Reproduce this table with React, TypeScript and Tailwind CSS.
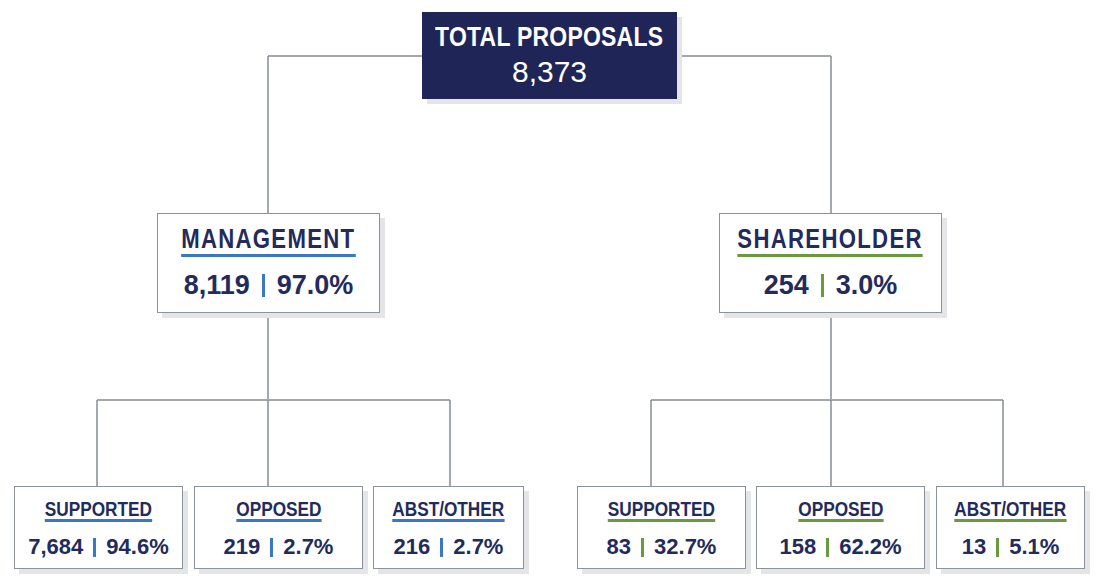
import React from "react";

type Accent = "blue" | "green";

const TITLE_FONT = "font-['Liberation_Sans',Arial,sans-serif] inline-block whitespace-nowrap scale-x-[0.82]";
const NUM_FONT = "font-['Liberation_Sans',Arial,sans-serif]";

function Bar({ accent, size }: { accent: Accent; size: "lg" | "sm" }) {
  const color = accent === "blue" ? "bg-[#3a78c3]" : "bg-[#6a9a3f]";
  const dims = size === "lg" ? "w-[3px] h-[23px]" : "w-[3px] h-[19px]";
  return <span className={`inline-block ${dims} ${color}`} />;
}

function MidNode({
  pos,
  title,
  num,
  pct,
  accent,
}: {
  pos: string;
  title: string;
  num: string;
  pct: string;
  accent: Accent;
}) {
  const line = accent === "blue" ? "border-[#3a78c3]" : "border-[#6a9a3f]";
  return (
    <div
      className={`absolute ${pos} h-[100px] bg-white border-[1.5px] border-[#8b9299] shadow-[5px_5px_0_#e3e5e8] flex flex-col items-center pt-[12px]`}
    >
      <span
        className={`${TITLE_FONT} font-bold text-[27px] leading-none tracking-[1.6px] text-[#232a5c] border-b-[3px] ${line} pb-px`}
      >
        {title}
      </span>
      <div
        className={`${NUM_FONT} font-bold text-[27px] leading-none text-[#232a5c] flex items-center gap-[12px] mt-[15px]`}
      >
        <span>{num}</span>
        <Bar accent={accent} size="lg" />
        <span>{pct}</span>
      </div>
    </div>
  );
}

function LeafNode({
  pos,
  title,
  num,
  pct,
  accent,
}: {
  pos: string;
  title: string;
  num: string;
  pct: string;
  accent: Accent;
}) {
  const line = accent === "blue" ? "border-[#3a78c3]" : "border-[#6a9a3f]";
  return (
    <div
      className={`absolute ${pos} top-[486px] h-[83px] bg-white border-[1.5px] border-[#8b9299] shadow-[5px_5px_0_#e3e5e8] flex flex-col items-center pt-[11px]`}
    >
      <span
        className={`${TITLE_FONT} font-bold text-[21px] leading-none text-[#232a5c] border-b-[3px] ${line}`}
      >
        {title}
      </span>
      <div
        className={`${NUM_FONT} font-bold text-[22px] leading-none text-[#232a5c] flex items-center gap-[10px] mt-[14px]`}
      >
        <span>{num}</span>
        <Bar accent={accent} size="sm" />
        <span>{pct}</span>
      </div>
    </div>
  );
}

function Connectors() {
  const h = { stroke: "#a4a8ad", strokeWidth: 2, fill: "none" };
  const v = { stroke: "#858d95", strokeWidth: 1.5, fill: "none" };
  return (
    <svg className="absolute left-0 top-0" width={1100} height={588} viewBox="0 0 1100 588">
      <path d="M268 56 H831" {...h} />
      <path d="M268 56 V214 M831 56 V214" {...v} />
      <path d="M268 313 V400" {...v} />
      <path d="M97 400 H450" {...h} />
      <path d="M97 400 V487 M268 400 V487 M450 400 V487" {...v} />
      <path d="M831 313 V400" {...v} />
      <path d="M651 400 H1003" {...h} />
      <path d="M651 400 V487 M831 400 V487 M1003 400 V487" {...v} />
    </svg>
  );
}

export default function App() {
  return (
    <div className="relative w-[1100px] h-[588px] bg-white overflow-hidden">
      <Connectors />

      <div className="absolute left-[422px] top-[12px] w-[255px] h-[87px] bg-[#1f2556] shadow-[5px_5px_0_#e3e5e8] flex flex-col items-center pt-[11px]">
        <span
          className={`${TITLE_FONT} font-bold text-[28px] leading-none tracking-[0.3px] text-white`}
        >
          TOTAL PROPOSALS
        </span>
        <span className={`${NUM_FONT} text-[30px] leading-none text-white mt-[6px]`}>8,373</span>
      </div>

      <MidNode pos="left-[157px] top-[213px] w-[223px]" title="MANAGEMENT" num="8,119" pct="97.0%" accent="blue" />
      <MidNode pos="left-[719px] top-[213px] w-[223px]" title="SHAREHOLDER" num="254" pct="3.0%" accent="green" />

      <LeafNode pos="left-[14px] w-[169px]" title="SUPPORTED" num="7,684" pct="94.6%" accent="blue" />
      <LeafNode pos="left-[194px] w-[169px]" title="OPPOSED" num="219" pct="2.7%" accent="blue" />
      <LeafNode pos="left-[373px] w-[151px]" title="ABST/OTHER" num="216" pct="2.7%" accent="blue" />

      <LeafNode pos="left-[577px] w-[169px]" title="SUPPORTED" num="83" pct="32.7%" accent="green" />
      <LeafNode pos="left-[756px] w-[169px]" title="OPPOSED" num="158" pct="62.2%" accent="green" />
      <LeafNode pos="left-[936px] w-[149px]" title="ABST/OTHER" num="13" pct="5.1%" accent="green" />
    </div>
  );
}
